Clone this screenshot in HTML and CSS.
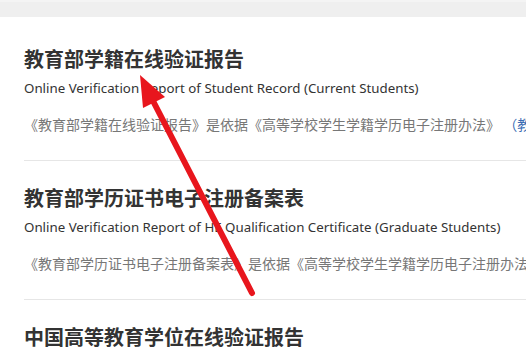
FILE: index.html
```html
<!DOCTYPE html>
<html lang="zh-CN">
<head>
    <meta charset="UTF-8">
    <meta name="viewport" content="width=device-width, initial-scale=1.0">
    <title>学信网 在线验证报告</title>
    <link rel="stylesheet" href="styles.css">
</head>
<body>
<div class="top-bar"></div>
<main class="report-list">
    <div class="report-item">
        <h2 class="report-title">教育部学籍在线验证报告</h2>
        <p class="report-en">Online Verification Report of Student Record (Current Students)</p>
        <p class="report-desc">《教育部学籍在线验证报告》是依据《高等学校学生学籍学历电子注册办法》 <a class="report-link" href="#">（教育部令第21号）</a></p>
    </div>
    <div class="report-item">
        <h2 class="report-title">教育部学历证书电子注册备案表</h2>
        <p class="report-en">Online Verification Report of HE Qualification Certificate (Graduate Students)</p>
        <p class="report-desc">《教育部学历证书电子注册备案表》是依据《高等学校学生学籍学历电子注册办法》 （教育部令第21号）</p>
    </div>
    <div class="report-item">
        <h2 class="report-title">中国高等教育学位在线验证报告</h2>
        <p class="report-en">Online Verification Report of Higher Education Degree</p>
        <p class="report-desc">《中国高等教育学位在线验证报告》是依据相关规定出具的</p>
    </div>
</main>
<svg class="arrow" width="526" height="355" viewBox="0 0 526 355">
    <line x1="252" y1="293" x2="151" y2="97" stroke="#e8161d" stroke-width="6" stroke-linecap="round"/>
    <polygon points="140,75 143,108 165,97" fill="#e8161d"/>
</svg>
</body>
</html>
```

FILE: styles.css
```css
body {
    margin: 0;
    background-color: #ffffff;
    overflow: hidden;
    font-family: "Noto Sans", "Noto Sans CJK SC", sans-serif;
}

.top-bar {
    height: 17px;
    background-color: #efefef;
    border-top: 2px solid #f4f4f4;
    box-sizing: border-box;
}

.report-list {
    padding-left: 24px;
    padding-top: 5px;
}

.report-item {
    padding-top: 23px;
    padding-bottom: 26px;
    border-bottom: 1px solid #e6e6e6;
}

.report-title {
    margin: 0;
    font-family: "Noto Sans CJK SC", sans-serif;
    font-size: 20px;
    line-height: 28px;
    font-weight: bold;
    color: #333333;
    white-space: nowrap;
}

.report-en {
    margin: 5px 0 0;
    font-size: 13.3px;
    line-height: 20px;
    color: #333333;
    white-space: nowrap;
}

.report-desc {
    margin: 16px 0 0;
    font-family: "Noto Sans CJK SC", sans-serif;
    font-size: 14px;
    line-height: 20px;
    color: #777777;
    white-space: nowrap;
}

.report-link {
    color: #3b6db3;
    text-decoration: none;
}

.arrow {
    position: absolute;
    left: 0;
    top: 0;
    pointer-events: none;
}
```
